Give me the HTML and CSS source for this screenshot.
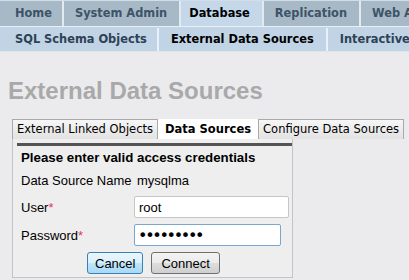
FILE: index.html
```html
<!DOCTYPE html>
<html>
<head>
<meta charset="utf-8">
<link rel="stylesheet" href="styles.css">
</head>
<body>
<div class="nav1">
  <a class="t1 first">Home</a>
  <a class="t1">System Admin</a>
  <a class="t1 active">Database</a>
  <a class="t1">Replication</a>
  <a class="t1">Web Admin</a>
</div>
<div class="nav2">
  <a class="t2 first">SQL Schema Objects</a>
  <a class="t2 active">External Data Sources</a>
  <a class="t2">Interactive SQL</a>
</div>
<h1 class="title">External Data Sources</h1>
<div class="subtabs">
  <span class="st">External Linked Objects</span>
  <span class="st active">Data Sources</span>
  <span class="st">Configure Data Sources</span>
</div>
<div class="panel">
  <div class="inner">
    <div class="ptitle">Please enter valid access credentials</div>
    <div class="row dsn"><span class="lbl">Data Source Name</span><span class="val">mysqlma</span></div>
    <div class="row user"><span class="lbl">User<span class="req">*</span></span><input class="inp" type="text" value="root"></div>
    <div class="row pass"><span class="lbl">Password<span class="req">*</span></span><input class="inp pw" type="password" value="123456789"></div>
    <div class="btns"><button class="btn sel">Cancel</button><button class="btn">Connect</button></div>
  </div>
</div>
</body>
</html>
```
FILE: styles.css
```css
html, body { margin: 0; padding: 0; }
body { background: #ebebee; width: 409px; height: 280px; overflow: hidden; font-family: "Liberation Sans", Arial, sans-serif; }
.nav1, .nav2 { display: flex; white-space: nowrap; overflow: hidden; box-sizing: border-box; height: 26px; }
.nav1 { background: #a7b9c7; border-top: 1px solid #d3dde5; }
.nav2 { background: #c0d4e5; border-top: 1px solid #e9f0f5; padding-top: 1px; border-bottom: 1px solid #dfe7ee; }
.t1, .t2 { font-family: "DejaVu Sans", Verdana, sans-serif; font-weight: bold; font-size: 11.4px; line-height: 25px; flex: none; }
.t1 { padding: 0 12px 0 11px; color: #3e5366; border-right: 2px solid #e2eaf0; }
.t1.first { padding: 0 10px 0 15px; }
.t1.active { background: #c4d8e9; color: #000; padding: 0 12px 0 8px; margin-left: 0; }
.t2 { padding: 0 12px 0 12px; color: #2e4255; border-right: 2px solid #eaf0f5; line-height: 23px; }
.t2.first { padding: 0 10px 0 15px; }
.t2.active { color: #000; }
.title { margin: 25px 0 0 8px; font-size: 24px; font-weight: bold; color: #a9a9a9; height: 28px; line-height: 28px; }
.subtabs { display: flex; margin: 14px 0 0 12px; height: 20px; }
.st { font-family: "DejaVu Sans", Verdana, sans-serif; font-size: 11.5px; color: #000; border: 1px solid #a9a9a9; border-bottom: none; background: linear-gradient(#f6f6f6, #e2e2e2); padding: 0 4px; line-height: 18px; margin-top: 0; }
.st.active { background: #fff; font-weight: bold; border-color: #fff; padding: 1px 7px 0 7px; line-height: 19px; border: none; }
.panel { margin-left: 12px; width: 281px; height: 139px; background: #eeeeee; border: 1px solid #c4c4c4; border-top: none; padding: 4px 0 0 4px; box-sizing: border-box; }
.inner { border-top: 3px solid #545454; padding: 4px 0 0 4px; }
.ptitle { font-weight: bold; font-size: 13.3px; line-height: 16px; height: 16px; color: #000; margin-bottom: 3px; }
.row { display: flex; align-items: center; font-size: 13px; color: #000; height: 22px; }
.row.dsn { margin-bottom: 5px; }
.row.user { margin-bottom: 6px; }
.lbl { width: 116px; flex: none; }
.req { color: #e8336b; }
.inp { width: 155px; height: 22px; box-sizing: border-box; border: 1px solid #c6c6c6; border-radius: 2px; background: #fff; font-family: "Liberation Sans", Arial, sans-serif; font-size: 13px; color: #000; padding: 0 4px; margin: 0 0 0 -3px; outline: none; }
.inp.pw { width: 147px; border-color: #7aa7d2; font-family: "DejaVu Sans", sans-serif; font-size: 16px; letter-spacing: -2.3px; padding: 0 3px; }
.btns { display: flex; gap: 8px; margin: 6px 0 0 66px; }
.btn { font-family: "Liberation Sans", Arial, sans-serif; font-size: 13px; height: 22px; padding: 0 9px; border: 1px solid #707070; border-radius: 3px; background: linear-gradient(#f3f3f3 0%, #ebebeb 50%, #dddddd 51%, #cfcfcf 100%); color: #000; }
.btn.sel { padding: 0 7px; border-color: #3c7fb1; background: linear-gradient(#eaf6fd 0%, #d9f0fc 50%, #bee6fd 51%, #a7d9f5 100%); }
```
